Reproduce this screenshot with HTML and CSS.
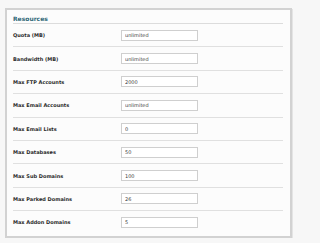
FILE: index.html
```html
<!DOCTYPE html>
<html>
<head>
<meta charset="utf-8">
<link rel="stylesheet" href="styles.css">
</head>
<body>
<div class="panel">
  <div class="heading">Resources</div>
  <div class="row"><span class="label">Quota (MB)</span><input class="field" type="text" value="unlimited"></div>
  <div class="row"><span class="label">Bandwidth (MB)</span><input class="field" type="text" value="unlimited"></div>
  <div class="row"><span class="label">Max FTP Accounts</span><input class="field" type="text" value="2000"></div>
  <div class="row"><span class="label">Max Email Accounts</span><input class="field" type="text" value="unlimited"></div>
  <div class="row"><span class="label">Max Email Lists</span><input class="field" type="text" value="0"></div>
  <div class="row"><span class="label">Max Databases</span><input class="field" type="text" value="50"></div>
  <div class="row"><span class="label">Max Sub Domains</span><input class="field" type="text" value="100"></div>
  <div class="row"><span class="label">Max Parked Domains</span><input class="field" type="text" value="26"></div>
  <div class="row last"><span class="label">Max Addon Domains</span><input class="field" type="text" value="5"></div>
</div>
</body>
</html>
```

FILE: styles.css
```css
html, body {
  margin: 0;
  padding: 0;
  background: #f7f7f7;
  font-family: "DejaVu Sans", Verdana, sans-serif;
}
body {
  padding: 8px 0 0 5px;
}
.panel {
  box-sizing: border-box;
  width: 287px;
  background: #fcfcfc;
  border: 2px solid #d2d2d2;
  box-shadow: 1px 1px 0 #e4e4e4;
  padding: 0 7px 2px 6px;
}
.heading {
  padding-top: 5px;
  line-height: 8px;
  font-size: 6px;
  font-weight: bold;
  color: #2f6878;
  border-bottom: 1px solid #dcdcdc;
}
.row {
  display: grid;
  grid-template-columns: 108px 77px;
  align-items: center;
  height: 22.4px;
  border-bottom: 1px solid #e0e0e0;
}
.row.last {
  border-bottom: none;
}
.label {
  font-size: 5px;
  font-weight: bold;
  color: #2a2a2a;
  line-height: 8px;
}
.field {
  box-sizing: border-box;
  width: 77px;
  height: 11px;
  margin: 0;
  padding: 0 0 0 3px;
  border: 1px solid #cfcfcf;
  background: #ffffff;
  font-family: "DejaVu Sans", Verdana, sans-serif;
  font-size: 5px;
  color: #3c3c3c;
  outline: none;
}
```
